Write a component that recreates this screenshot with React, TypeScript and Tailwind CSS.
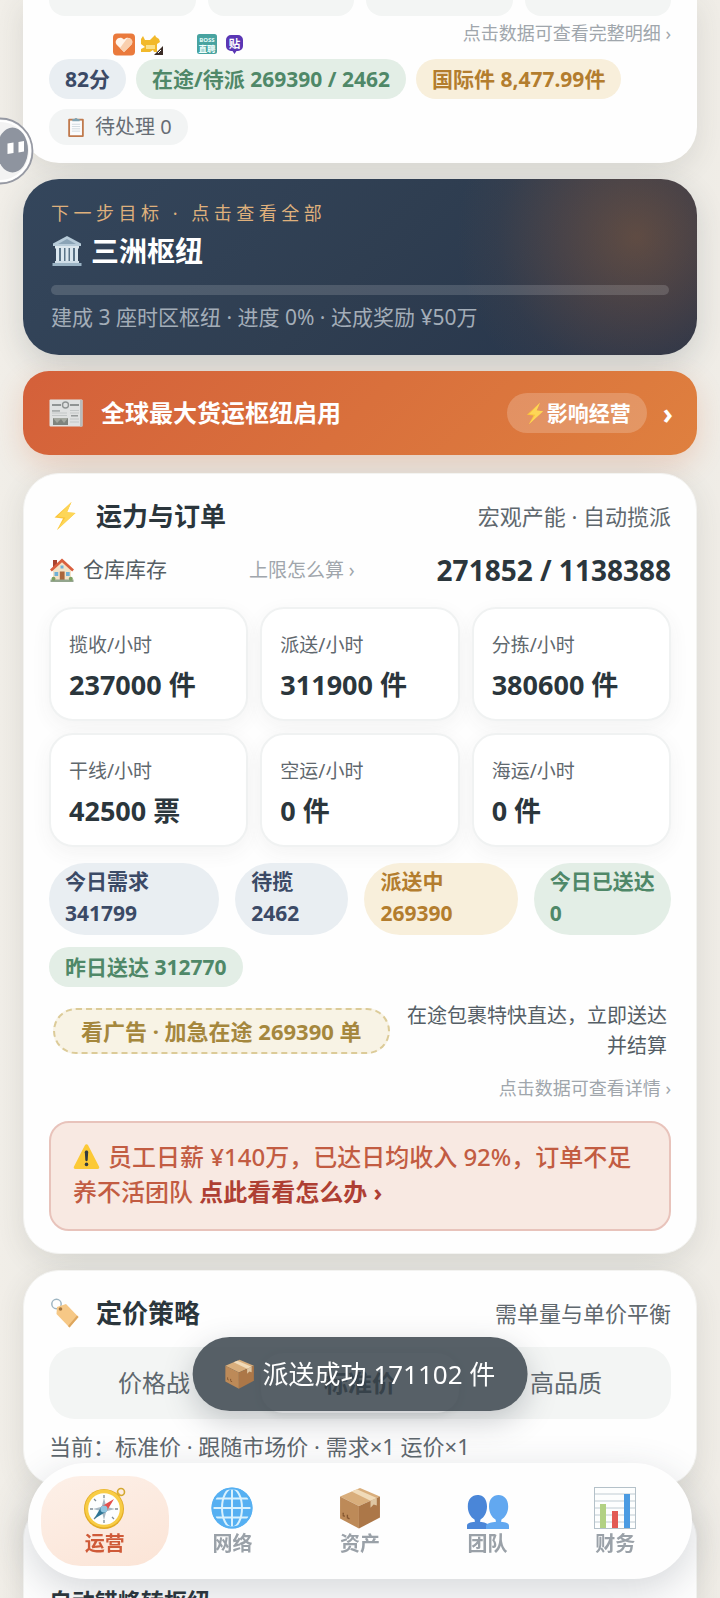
import React from 'react'

const ClipboardIcon = () => (
  <svg viewBox="0 0 24 24" className="size-[22px] shrink-0" aria-hidden="true">
    <rect x="3.5" y="3" width="17" height="20" rx="1.2" fill="#c07a4d" />
    <rect x="5.5" y="5" width="13" height="16" fill="#fbfcfd" />
    <path d="M7.5 9h9M7.5 11.5h9M7.5 14h9M7.5 16.5h9" stroke="#c9d3da" strokeWidth="0.9" />
    <path d="M8 5.6V3.4h2.3a1.8 1.8 0 0 1 3.4 0H16v2.2z" fill="#7fa3b2" />
  </svg>
)

const MuseumIcon = () => (
  <svg viewBox="0 0 32 32" className="size-8 shrink-0" aria-hidden="true">
    <path d="M16 1 30 8.500v2.500H2V8.500z" fill="#b7cbd9" />
    <path d="M16 4 25 9H7z" fill="#8ba4b7" />
    <path d="M4 11h24v2.500H4z" fill="#dce7ee" />
    <path d="M5 13h22v13H5z" fill="#5b7488" />
    <path d="M5 13h3v13H5zM10 13h3v13h-3zM14.500 13h3v13h-3zM19 13h3v13h-3zM24 13h3v13h-3z" fill="#dbe7ef" />
    <path d="M4 26h24v2H4z" fill="#cfdde7" />
    <path d="M1.500 28h29v3h-29z" fill="#9bb3c4" />
  </svg>
)

const NewsIcon = () => (
  <svg viewBox="0 0 34 28" className="h-7 w-[34px] shrink-0" aria-hidden="true">
    <rect x="0.500" y="0.500" width="33" height="27" rx="1" fill="#dfe1e1" />
    <path d="M31 1h2.500v26.500H31z" fill="#b9bcbc" />
    <path d="M3 6h9M21 6h9" stroke="#8f9494" strokeWidth="2.200" />
    <circle cx="16.500" cy="6" r="3" fill="none" stroke="#8f9494" strokeWidth="1.400" />
    <path d="M3 11.500h8M3 14h15M3 16.500h15M21 11.500h9M21 14h9M21 20h9M21 23h9" stroke="#c3c7c7" />
    <path d="M22 16.800h7" stroke="#8f9494" strokeWidth="1.400" />
    <path d="M3 12h8" stroke="#9da2a2" strokeWidth="1.300" />
    <path d="M4 19h15v7H4z" fill="#a3a79f" />
    <path d="m4 19 4 5 4-4 3 4 4-5v7H4z" fill="#7e837d" />
  </svg>
)

const BoltIcon = ({ className }: { className: string }) => (
  <svg viewBox="0 0 24 30" className={className} aria-hidden="true">
    <path d="M18.500 1 1.500 16.500l8.500 1L4 29l18.500-17-8.500-.8z" fill="#fbc53a" />
    <path d="M18.500 1 4.500 15.500l8 1L4 29l18.500-17-8.500-.8z" fill="#fdd657" />
  </svg>
)

const HouseIcon = () => (
  <svg viewBox="0 0 26 26" className="size-[26px] shrink-0" aria-hidden="true">
    <path d="M4 3h4v7H4z" fill="#a8442f" />
    <path d="M4 12 13 4l9 8v11H4z" fill="#f3e2c6" />
    <path d="M13 1.500 1 12.500l1.800 2L13 5.300l10.200 9.200 1.800-2z" fill="#d95f3e" />
    <path d="M10.800 14.500h4.800V23h-4.800z" fill="#a9653c" />
    <path d="M5.500 15h3.700v4H5.500zM17 15h3.700v4H17z" fill="#6fb0d6" />
    <path d="M11.500 8.500h3v3h-3z" fill="#6fb0d6" />
    <path d="M1.500 22.500h23V25h-23z" fill="#93a58d" />
    <circle cx="4.500" cy="21.800" r="2" fill="#7e9f61" />
    <circle cx="21.800" cy="21.800" r="2" fill="#7e9f61" />
  </svg>
)

const WarnIcon = () => (
  <svg viewBox="0 0 27 27" className="mr-2 inline-block size-[27px] align-[-4px]" aria-hidden="true">
    <path d="M13.500 1.200c.7 0 1.200.4 1.600 1L26 23.500c.7 1.300 0 2.500-1.400 2.500H2.400C1 26 .3 24.800 1 23.500L11.900 2.200c.4-.6.900-1 1.600-1z" fill="#fcc936" />
    <path d="M11.800 9.200c0-1 .7-1.700 1.700-1.700s1.700.7 1.700 1.700l-.5 7.800c-.1 1.500-2.300 1.500-2.400 0z" fill="#333b41" />
    <circle cx="13.500" cy="21.400" r="1.800" fill="#333b41" />
  </svg>
)

const TagIcon = () => (
  <svg viewBox="0 0 30 30" className="size-[30px]" aria-hidden="true">
    <circle cx="6.500" cy="6" r="4.700" fill="none" stroke="#9fb6c3" strokeWidth="1.500" />
    <path d="m7 9 9-3 12.500 13-9 10.500L6.500 16z" fill="#f6c886" />
    <path d="m28.500 19-9 10.500-1.500-1.500L27 17.500z" fill="#dda65e" />
    <circle cx="10.500" cy="11" r="1.800" fill="#a4753f" />
  </svg>
)

const BoxIcon = ({ className }: { className: string }) => (
  <svg viewBox="0 0 40 40" className={className} aria-hidden="true">
    <path d="m20 1 19 8-20 9L1 9z" fill="#d9ae7c" />
    <path d="M1 9l18 9v21.500L1 30z" fill="#bd8a58" />
    <path d="M39 9 19 18v21.500L39 29z" fill="#ac7748" />
    <path d="m12 4.400 5-2.200 19 8.200-6 2.700z" fill="#f1dbb9" />
    <path d="m30 13.100 6-2.700v7.200l-3-1-3 3.200z" fill="#dfc6a2" />
    <path d="m3.500 27 2 1M7.500 29l2.500 1.300M4 24.500v2M8 26.500v2" stroke="#84552f" strokeWidth="1.300" />
  </svg>
)

const CompassIcon = () => (
  <svg viewBox="0 0 42 42" className="size-[42px]" aria-hidden="true">
    <circle cx="37" cy="5" r="3.500" fill="none" stroke="#d3a72f" strokeWidth="1.600" />
    <path d="m31 8 3-3 3 3-3 3z" fill="#e1b236" />
    <circle cx="20" cy="22" r="20" fill="#e2ab25" />
    <circle cx="20" cy="21.500" r="19" fill="#f8cc45" />
    <circle cx="20" cy="22" r="15.800" fill="#fdfefe" />
    <path d="M20 8v3M20 33v3M6 22h3M31 22h3M10 12l2 2M28 30l2 2M10 32l2-2" stroke="#7e8c95" strokeWidth="1.300" />
    <path d="m20 11 2.300 8.700L31 22l-8.700 2.300L20 33l-2.300-8.700L9 22l8.700-2.300z" fill="#a8b8c2" />
    <path d="m30 12-7.500 12.600-5.100-5.100z" fill="#e4504c" />
    <path d="m10 32 7.400-12.500 5.100 5.100z" fill="#2f7695" />
    <circle cx="20" cy="22" r="3.500" fill="#8fc5df" />
  </svg>
)

const GlobeIcon = () => (
  <svg viewBox="0 0 42 42" className="size-[42px]" fill="none" stroke="#d9f1fd" strokeWidth="2" aria-hidden="true">
    <circle cx="21" cy="21" r="20.500" fill="#56b0f2" stroke="none" />
    <path d="M1 21h40M4.500 11.500h33M4.500 30.500h33M21 1v40" />
    <ellipse cx="21" cy="21" rx="10" ry="19.500" />
    <circle cx="21" cy="21" r="19.500" stroke="#56b0f2" />
  </svg>
)

const PeopleIcon = () => (
  <svg viewBox="0 0 42 42" className="size-[42px]" aria-hidden="true">
    <path d="M10.500 8C16 8 20 12 20 19.500c0 6-2.800 11-6.500 13l-.5 2.200c4 .6 8 1 8 4.300v3H0v-3c0-3.300 3-3.700 8-4.300l-.5-2.200C3.800 30.500.8 25.500.8 19.500.8 12 5 8 10.500 8z" fill="#4a86d8" />
    <path d="M31.500 8C37 8 41.200 12 41.200 19.500c0 6-3 11-6.700 13l-.5 2.200c5 .6 8 1 8 4.300v3H19v-3c0-3.300 6-3.700 10-4.300l-.5-2.200c-3.700-2-6.500-7-6.500-13C22 12 26 8 31.500 8z" fill="#62a8f0" />
  </svg>
)

const ChartIcon = () => (
  <svg viewBox="0 0 42 42" className="size-[42px]" aria-hidden="true">
    <rect x="0.500" y="0.500" width="41" height="41" fill="#fdfefe" stroke="#b4c1c9" />
    <path d="M1 7h40M1 14h40M1 21h40M1 28h40M1 35h40" stroke="#c0ccd3" />
    <path d="M6 17h6v24H6z" fill="#b2d183" />
    <path d="M18 24h6v17h-6z" fill="#e25a54" />
    <path d="M30 7h6v34h-6z" fill="#4b9be2" />
  </svg>
)

// small app notifications along the phone's status bar
const StatusIcons = () => (
  <svg viewBox="0 0 134 24" className="absolute left-28 top-[33px] z-10 h-6 w-[134px]" aria-hidden="true">
    <rect x="1" y="0.500" width="22" height="22" rx="4" fill="#ea7a3c" />
    <path d="M12 19 4.500 11.500C1.500 7 8 2 12 6.500 16 2 22.500 7 19.500 11.500z" fill="#fff4ea" />
    <path d="m12 19-4-4 7-9.500c4-1.500 7 2.500 4.500 6z" fill="#f9cfae" />
    <path d="M29 6l2-3 2 4h5l5-5 1 2 3 2 1 3-3 2v8h-3l-1-2-3 2H29v-3l4-2-4-3z" fill="#f2b92b" />
    <path d="M34 12h9v4h-9z" fill="#fbe08a" />
    <path d="m51 13v9h-9z" fill="#3b2c26" />
    <path d="m46 20 3-3" stroke="#fff" />
    <rect x="85" y="1" width="20" height="20" rx="2.500" fill="#48a3a0" />
    <text x="95" y="9" fontSize="6" fontWeight="700" textAnchor="middle" fill="#e5fbf8">BOSS</text>
    <text x="95" y="18.500" fontSize="8.500" fontWeight="700" textAnchor="middle" fill="#f2fffd">直聘</text>
    <path d="M119 2h7a5 5 0 0 1 5 5v6a5 5 0 0 1-5 5h-1.500l-2 3-2-3H119a5 5 0 0 1-5-5V7a5 5 0 0 1 5-5z" fill="#5a36b4" />
    <text x="122.500" y="14.500" fontSize="11.500" fontWeight="700" textAnchor="middle" fill="#fff">贴</text>
  </svg>
)

const AssistantBubble = () => (
  <button aria-label="助手" className="absolute left-0 top-[117px] z-10 h-[68px] w-[34px] overflow-hidden">
    <svg viewBox="0 0 34 68" className="h-[68px] w-[34px]" aria-hidden="true">
      <circle cx="0" cy="34" r="32.500" fill="#f3f3f3" stroke="#9699a3" strokeWidth="1.800" />
      <circle cx="0" cy="34" r="30" fill="none" stroke="#fff" strokeWidth="2" />
      <ellipse cx="12.500" cy="33" rx="15.500" ry="22.500" fill="#8e949f" />
      <path d="m7.500 26.500 6-1v10.500l-6 1zM18.500 25l5.500-1v10.500l-5.500 1z" fill="#fff" />
    </svg>
  </button>
)

const chipColors = {
  blue: "bg-[#e9eef2] text-[#3b4a66]",
  green: "bg-[#e3eee6] text-[#4f8868]",
  gold: "bg-[#f8efdb] text-[#b37d2e]",
}

const stats = [
  { name: "揽收/小时", value: "237000 件" },
  { name: "派送/小时", value: "311900 件" },
  { name: "分拣/小时", value: "380600 件" },
  { name: "干线/小时", value: "42500 票" },
  { name: "空运/小时", value: "0 件" },
  { name: "海运/小时", value: "0 件" },
]

const orders = [
  { name: "今日需求", value: "341799", color: chipColors.blue },
  { name: "待揽", value: "2462", color: chipColors.blue },
  { name: "派送中", value: "269390", color: chipColors.gold },
  { name: "今日已送达", value: "0", color: chipColors.green },
]

const tabs = [
  { name: "运营", icon: <CompassIcon />, active: true },
  { name: "网络", icon: <GlobeIcon /> },
  { name: "资产", icon: <BoxIcon className="size-[42px]" /> },
  { name: "团队", icon: <PeopleIcon /> },
  { name: "财务", icon: <ChartIcon /> },
]

const Card = ({ children, className = "" }: { children: React.ReactNode; className?: string }) => (
  <section className={"rounded-[36px] border border-[#f3f3f1] bg-[#fefefe] px-[25px] shadow-[0_8px_28px_rgba(70,75,60,0.11)] " + className}>
    {children}
  </section>
)

const CardHeader = ({ icon, title, note }: { icon: React.ReactNode; title: string; note: string }) => (
  <div className="flex h-9 items-center">
    <span className="flex w-8 shrink-0 justify-center">{icon}</span>
    <h2 className="ml-[15px] text-[26px] font-bold leading-9 text-[#2b363c]">{title}</h2>
    <span className="ml-auto text-[22px] leading-9 text-[#5f686e]">{note}</span>
  </div>
)

const Chip = ({ color, children }: { color: string; children: React.ReactNode }) => (
  <span className={"flex h-10 items-center whitespace-nowrap rounded-full px-4 text-[21px] font-bold leading-9 " + color}>{children}</span>
)

function App() {
  return (
    <div className="relative h-screen overflow-hidden bg-[linear-gradient(90deg,#f1eee8,#e9e8e3_12%,#e9e8e3_88%,#f0ede7)] font-['Noto_Sans','Noto_Sans_CJK_SC',sans-serif]">
      <StatusIcons />
      <AssistantBubble />

      <main className="flex flex-col gap-4 px-[23px]">
        <section className="rounded-b-[36px] bg-[#fefefe] px-[26px] pb-[18px] shadow-[0_8px_28px_rgba(70,75,60,0.11)]">
          <div className="grid grid-cols-4 gap-3">
            <div className="h-4 rounded-b-[28px] bg-[#f3f5f4]" />
            <div className="h-4 rounded-b-[28px] bg-[#f3f5f4]" />
            <div className="h-4 rounded-b-[28px] bg-[#f3f5f4]" />
            <div className="h-4 rounded-b-[28px] bg-[#f3f5f4]" />
          </div>
          <a href="#" className="mb-[14px] mt-[5px] block text-right text-[18px] leading-6 text-[#a0a6ac]">点击数据可查看完整明细 ›</a>
          <div className="flex flex-wrap gap-[10px]">
            <Chip color={chipColors.blue}>82分</Chip>
            <Chip color={chipColors.green}>在途/待派 269390 / 2462</Chip>
            <Chip color={chipColors.gold}>国际件 8,477.99件</Chip>
            <button className="flex h-9 items-center gap-2 rounded-full bg-[#f2f4f4] px-4 text-[20px] text-[#666d74]">
              <ClipboardIcon />
              待处理 0
            </button>
          </div>
        </section>

        <section className="rounded-[36px] bg-[radial-gradient(circle_at_91%_33%,rgba(190,110,50,0.36),rgba(180,100,50,0.2)_80px,rgba(160,90,50,0.06)_140px,transparent_180px),linear-gradient(135deg,#34465c,#2f3e51_50%,#26344a)] px-7 pb-6 pt-[22px] shadow-[0_10px_30px_rgba(50,60,70,0.16)]">
          <p className="text-[18px] leading-6 tracking-[0.25em] text-[#dfb07c]">下一步目标 · 点击查看全部</p>
          <h2 className="mt-2 flex items-center gap-2 text-[28px] font-bold leading-9 text-white">
            <MuseumIcon />
            三洲枢纽
          </h2>
          <div role="progressbar" aria-label="三洲枢纽" aria-valuenow={0} className="mt-4 h-[10px] rounded-full bg-white/15" />
          <p className="mt-2 text-[21px] leading-7 text-[#a3adb8]">建成 3 座时区枢纽 · 进度 0% · 达成奖励 ¥50万</p>
        </section>

        <button className="flex items-center rounded-[26px] bg-[linear-gradient(135deg,#d4603a,#d9703c_50%,#df803f)] py-[22px] pl-[26px] pr-6 text-white shadow-[0_10px_28px_rgba(225,110,60,0.22)]">
          <NewsIcon />
          <span className="ml-[18px] text-[24px] font-bold leading-9">全球最大货运枢纽启用</span>
          <span className="ml-auto flex h-10 items-center rounded-full bg-white/20 px-4 text-[21px] font-bold leading-9">
            <BoltIcon className="h-[23px] w-6" />
            影响经营
          </span>
          <span className="ml-4 text-[28px] font-bold leading-8">›</span>
        </button>

        <Card className="mt-0.5 pb-[22px] pt-6">
          <CardHeader icon={<BoltIcon className="h-[30px] w-6" />} title="运力与订单" note="宏观产能 · 自动揽派" />
          <div className="mt-[18px] flex h-9 items-center justify-between">
            <span className="flex items-center gap-2 text-[21px] text-[#555e64]">
              <HouseIcon />
              仓库库存
            </span>
            <a href="#" className="text-[19px] text-[#a0a6ac]">上限怎么算 ›</a>
            <span className="text-[28px] font-bold text-[#2b363c]">271852 / 1138388</span>
          </div>

          <div className="mt-[19px] grid grid-cols-3 gap-3">
            {stats.map((stat) => (
              <button key={stat.name} className="rounded-[24px] border-2 border-[#f0f2f2] bg-white px-[18px] pb-4 pt-[22px] text-left shadow-[0_6px_20px_rgba(60,75,75,0.06)]">
                <div className="text-[19px] leading-7 text-[#5f686e]">{stat.name}</div>
                <div className="mt-2 text-[27px] font-bold leading-9 text-[#2b363c]">{stat.value}</div>
              </button>
            ))}
          </div>

          <div className="mt-4 grid grid-cols-[170fr_113fr_153fr_137fr] gap-4">
            {orders.map((order) => (
              <button key={order.name} className={"whitespace-nowrap rounded-[36px] px-4 pb-[6px] pt-[2px] text-left text-[21px] font-bold leading-8 " + order.color}>
                {order.name}
                <br />
                {order.value}
              </button>
            ))}
          </div>
          <div className="mt-3 flex">
            <Chip color={chipColors.green}>昨日送达 312770</Chip>
          </div>

          <div className="mt-[14px] flex items-center gap-3 px-1">
            <button className="h-[46px] shrink-0 rounded-full border-2 border-dashed border-[#dccb98] bg-[#f8f3e5] px-[26px] text-[22px] font-bold text-[#a5873d]">
              看广告 · 加急在途 269390 单
            </button>
            <p className="flex-1 text-right text-[20px] leading-[30px] text-[#555e66]">在途包裹特快直达，立即送达并结算</p>
          </div>
          <a href="#" className="mt-[15px] block text-right text-[18px] leading-6 text-[#a0a6ac]">点击数据可查看详情 ›</a>

          <div className="mt-[21px] rounded-[20px] border-2 border-[#e8c3bb] bg-[#f8e9e2] px-[22px] pb-5 pt-4 text-[24px] font-medium leading-[35px] text-[#c25c42]">
            <WarnIcon />
            员工日薪 ¥140万，已达日均收入 92%，订单不足养不活团队 <a href="#" className="font-bold text-[#ae3f33]">点此看看怎么办 ›</a>
          </div>
        </Card>

        <Card className="pb-6 pt-6">
          <CardHeader icon={<TagIcon />} title="定价策略" note="需单量与单价平衡" />
          <div className="mt-4 grid h-[72px] grid-cols-3 gap-2 rounded-[26px] bg-[#f3f5f4] p-[6px] text-[24px] text-[#5f686e]">
            <button>价格战</button>
            <button className="rounded-[22px] bg-[#fafbfb] font-bold text-[#2b363c] shadow-[0_2px_8px_rgba(50,60,60,0.12)]">标准价</button>
            <button>高品质</button>
          </div>
          <p className="mt-3 text-[22px] leading-[30px] text-[#5f686e]">当前：标准价 · 跟随市场价 · 需求×1 运价×1</p>
        </Card>

        <Card className="pb-6 pt-20">
          <h3 className="text-[23px] font-bold leading-9 text-[#2b363c]">自动错峰转枢纽</h3>
        </Card>
      </main>

      <div role="status" className="fixed bottom-[187px] left-1/2 flex h-[74px] -translate-x-1/2 items-center gap-2 whitespace-nowrap rounded-full bg-[#3a444c]/85 px-8 text-[26px] text-white shadow-[0_10px_30px_rgba(50,60,70,0.25)]">
        <BoxIcon className="size-[30px]" />
        派送成功 171102 件
      </div>

      <nav className="fixed inset-x-7 bottom-[19px] grid grid-cols-5 rounded-full bg-[#fefefe] p-[13px] shadow-[0_12px_40px_rgba(50,60,75,0.2)]">
        {tabs.map((tab) => (
          <a
            key={tab.name}
            href="#"
            className={
              tab.active
                ? "flex h-[90px] flex-col items-center rounded-[40px] bg-[linear-gradient(160deg,#fdf0e8,#fbe4d6)] pt-[11px] text-[#cf5a38]"
                : "flex h-[90px] flex-col items-center pt-[11px] text-[#9aa1a8]"
            }
          >
            {tab.icon}
            <span className="text-[20px] font-bold leading-[30px]">{tab.name}</span>
          </a>
        ))}
      </nav>
    </div>
  )
}

export default App
